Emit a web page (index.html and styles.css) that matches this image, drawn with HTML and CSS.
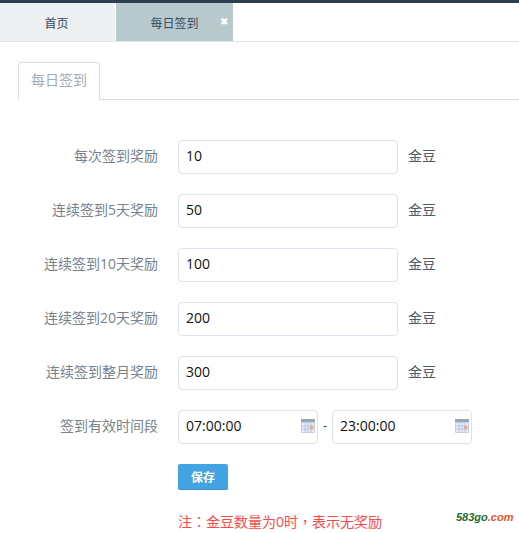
FILE: index.html
```html
<!DOCTYPE html>
<html lang="zh-CN">
<head>
	<meta charset="UTF-8">
	<title>每日签到</title>
	<link rel="stylesheet" href="styles.css">
</head>
<body>
	<div class="top-bar"></div>
	<div class="page-tabs">
		<div class="page-tab">首页</div>
		<div class="page-tab active">每日签到<span class="tab-close">&#10006;</span></div>
	</div>
	<div class="content">
		<div class="nav-tabs">
			<div class="nav-tab">每日签到</div>
		</div>
		<form class="form">
			<div class="form-row">
				<label class="form-label">每次签到奖励</label>
				<input class="form-input" type="text" value="10">
				<span class="unit">金豆</span>
			</div>
			<div class="form-row">
				<label class="form-label">连续签到5天奖励</label>
				<input class="form-input" type="text" value="50">
				<span class="unit">金豆</span>
			</div>
			<div class="form-row">
				<label class="form-label">连续签到10天奖励</label>
				<input class="form-input" type="text" value="100">
				<span class="unit">金豆</span>
			</div>
			<div class="form-row">
				<label class="form-label">连续签到20天奖励</label>
				<input class="form-input" type="text" value="200">
				<span class="unit">金豆</span>
			</div>
			<div class="form-row">
				<label class="form-label">连续签到整月奖励</label>
				<input class="form-input" type="text" value="300">
				<span class="unit">金豆</span>
			</div>
			<div class="form-row">
				<label class="form-label">签到有效时间段</label>
				<div class="time-input">
					<input class="form-input time" type="text" value="07:00:00">
					<svg class="cal-icon" width="14" height="14" viewBox="0 0 14 14">
						<rect x="0" y="0" width="14" height="14" rx="1" fill="#c5d0e2"/>
						<rect x="0" y="0" width="14" height="3" fill="#9aa5b8"/>
						<rect x="1" y="4" width="12" height="9" fill="#e6edf8"/>
						<path d="M1 7h12M1 10h12M4 4v9M7 4v9M10 4v9" stroke="#b7c6e2" stroke-width="1"/>
						<rect x="9" y="7" width="3" height="3" fill="#eda77f"/>
					</svg>
				</div>
				<span class="dash">-</span>
				<div class="time-input">
					<input class="form-input time" type="text" value="23:00:00">
					<svg class="cal-icon" width="14" height="14" viewBox="0 0 14 14">
						<rect x="0" y="0" width="14" height="14" rx="1" fill="#c5d0e2"/>
						<rect x="0" y="0" width="14" height="3" fill="#9aa5b8"/>
						<rect x="1" y="4" width="12" height="9" fill="#e6edf8"/>
						<path d="M1 7h12M1 10h12M4 4v9M7 4v9M10 4v9" stroke="#b7c6e2" stroke-width="1"/>
						<rect x="9" y="7" width="3" height="3" fill="#eda77f"/>
					</svg>
				</div>
			</div>
			<div class="form-actions">
				<button class="btn-save" type="button">保存</button>
			</div>
			<div class="form-note" lang="zh-Hant">注：金豆数量为0时，表示无奖励</div>
		</form>
	</div>
	<div class="watermark">583go<span class="watermark-end">.com</span></div>
</body>
</html>
```

FILE: styles.css
```css
html, body {
	height: 533px;
	overflow: hidden;
}
body {
	margin: 0;
	position: relative;
	background: #fff;
	color: #4f5b66;
	font-family: "Open Sans", "Noto Sans CJK SC", sans-serif;
	font-size: 14px;
}
.top-bar {
	height: 3px;
	background: #2c3e50;
}
.page-tabs {
	display: flex;
	height: 38px;
	border-bottom: 1px solid #e4e6e6;
}
.page-tab {
	position: relative;
	width: 115px;
	padding-right: 2px;
	box-sizing: border-box;
	line-height: 42px;
	font-size: 12px;
	text-align: center;
	color: #34495e;
	background: #ecf0f1;
}
.page-tab.active {
	width: 117px;
	margin-left: 1px;
	padding-right: 0;
	background: #b8c9cd;
}
.tab-close {
	position: absolute;
	top: -3px;
	right: 5px;
	font-size: 10px;
	color: #fff;
}
.content {
	padding: 20px 0 0 18px;
}
.nav-tabs {
	height: 37px;
	border-bottom: 1px solid #dddddd;
}
.nav-tab {
	box-sizing: border-box;
	width: 82px;
	height: 38px;
	line-height: 34px;
	text-align: center;
	color: #a3adb5;
	background: #fff;
	border: 1px solid #dddddd;
	border-bottom: 0;
	border-radius: 4px 4px 0 0;
}
.form {
	padding-top: 40px;
}
.form-row {
	display: flex;
	align-items: center;
	height: 34px;
	margin-bottom: 20px;
}
.form-label {
	width: 140px;
	margin-right: 20px;
	padding-bottom: 4px;
	text-align: right;
	color: #76828c;
	white-space: nowrap;
}
.form-input {
	box-sizing: border-box;
	width: 220px;
	height: 34px;
	padding: 0 7px 4px;
	border: 1px solid #dbe4ee;
	border-radius: 4px;
	outline: none;
	font: inherit;
	color: #111;
}
.form-input.time {
	width: 140px;
}
.unit {
	margin-left: 10px;
	padding-bottom: 4px;
	color: #4f5b66;
}
.time-input {
	position: relative;
	height: 34px;
}
.cal-icon {
	position: absolute;
	top: 9px;
	right: 3px;
}
.dash {
	width: 14px;
	padding-bottom: 4px;
	text-align: center;
}
.form-actions {
	padding-left: 160px;
}
.btn-save {
	display: block;
	width: 50px;
	height: 26px;
	padding: 0;
	border: 0;
	border-bottom: 1px solid #3a92cf;
	border-radius: 2px;
	font: inherit;
	font-size: 12px;
	font-weight: bold;
	color: #fff;
	background: #43a3e3;
}
.form-note {
	padding-left: 160px;
	margin-top: 21px;
	font-family: "Open Sans", "Noto Sans CJK TC", sans-serif;
	color: #fb4a4a;
}
.watermark {
	position: absolute;
	left: 456px;
	top: 511px;
	font-family: "Liberation Sans", sans-serif;
	font-size: 11px;
	font-style: italic;
	font-weight: bold;
	color: #1c6b2c;
}
.watermark-end {
	color: #e8532a;
}
```
